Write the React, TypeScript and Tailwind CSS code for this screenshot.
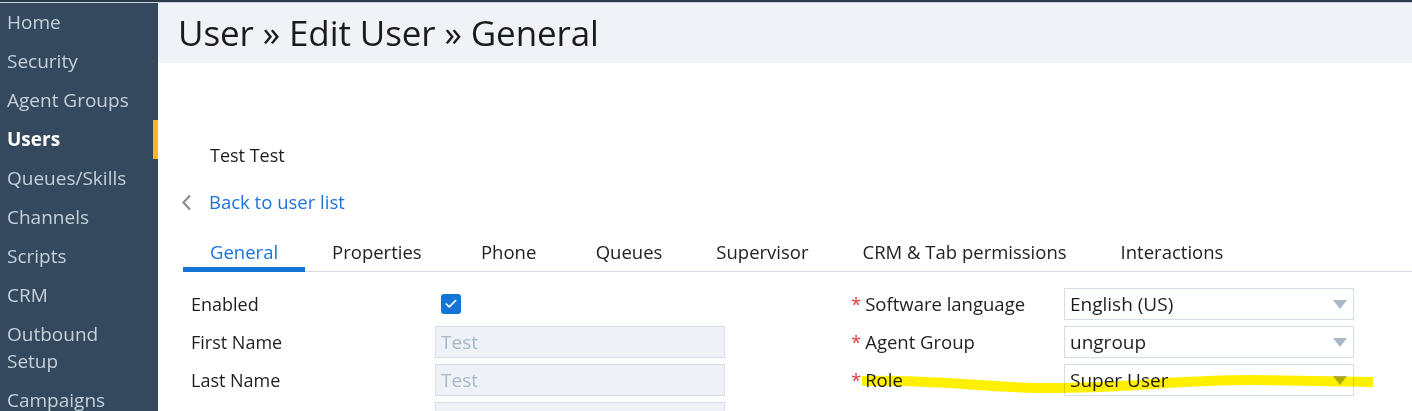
import { Check } from "lucide-react";

const navItems = [
  "Home",
  "Security",
  "Agent Groups",
  "Users",
  "Queues/Skills",
  "Channels",
  "Scripts",
  "CRM",
  "Outbound Setup",
  "Campaigns",
];

const tabs = [
  "General",
  "Properties",
  "Phone",
  "Queues",
  "Supervisor",
  "CRM & Tab permissions",
  "Interactions",
];

function SelectBox({ value }: { value: string }) {
  return (
    <div className="w-[290px] h-[32px] border border-[#d5dde8] bg-white flex items-center justify-between pl-[5px] pr-[6px]">
      <span className="text-[19px] text-[#1e1e1e]">{value}</span>
      <svg width="14" height="9" viewBox="0 0 14 9">
        <path d="M0 0 L14 0 L7 9 Z" fill="#a9b7c9" />
      </svg>
    </div>
  );
}

function TextBox({ value }: { value?: string }) {
  return (
    <div className="w-[290px] h-[32px] border border-[#d5dde8] bg-[#eef2f7] flex items-center pl-[5px]">
      <span className="text-[19px] text-[#a8b8cb]">{value}</span>
    </div>
  );
}

export default function App() {
  return (
    <div className="relative w-[1412px] h-[411px] overflow-hidden bg-white font-['Open_Sans',sans-serif]">
      <div className="h-[3px] bg-[#2a3949] border-b border-[#c9d1da]" />
      <div className="flex h-[408px]">
        {/* LEFT: Sidebar */}
        <div className="w-[158px] shrink-0 bg-[#34495e]">
          {navItems.map((item) => (
            <div
              key={item}
              className={`relative pl-[7px] pr-2 text-[19px] ${
                item === "Outbound Setup" ? "py-[6px] leading-[27px]" : "py-[8px] leading-[23px]"
              } ${item === "Users" ? "text-white font-bold" : "text-[#c5d0db]"}`}
            >
              {item === "Outbound Setup" ? (
                <>
                  Outbound
                  <br />
                  Setup
                </>
              ) : (
                item
              )}
              {item === "Users" && (
                <div className="absolute right-0 top-0 w-[5px] h-full bg-[#fbb526]" />
              )}
            </div>
          ))}
        </div>

        {/* RIGHT: Content */}
        <div className="flex-1 flex flex-col">
          <div className="h-[60px] shrink-0 bg-[#eff2f7] flex items-center pl-[20px]">
            <h1 className="text-[35px] text-[#1b1b1b] tracking-[-0.1px]">
              User » Edit User » General
            </h1>
          </div>

          <div className="shrink-0 mt-[80px] h-[24px] leading-[24px] pl-[52px] text-[18px] text-[#1d1d1d]">
            Test Test
          </div>

          <div className="shrink-0 mt-[23px] h-[24px] flex items-center pl-[23px] text-[#1b73d8]">
            <svg width="11" height="17" viewBox="0 0 11 17">
              <polyline points="9,1.5 2.5,8.5 9,15.5" fill="none" stroke="#8a8f96" strokeWidth="2.2" />
            </svg>
            <span className="ml-[17px] text-[18.5px] leading-[24px]">Back to user list</span>
          </div>

          <div className="shrink-0 mt-[26px] ml-[25px] flex border-b border-[#d3dae3]">
            {tabs.map((tab) => (
              <div
                key={tab}
                className={`min-w-[120px] text-center px-[27px] pb-[3px] text-[18.5px] leading-[24px] -mb-px border-b-[5px] ${
                  tab === "General"
                    ? "text-[#1b73d8] border-[#1475d6]"
                    : "text-[#222] border-transparent"
                }`}
              >
                {tab}
              </div>
            ))}
          </div>

          <div className="shrink-0 flex pt-[16px] text-[18px] text-[#1f1f1f]">
            {/* left column */}
            <div className="pl-[33px] flex flex-col gap-[6px]">
              <div className="flex items-center h-[32px]">
                <span className="w-[244px]">Enabled</span>
                <div className="ml-[6px] w-[20px] h-[20px] rounded-[3px] bg-[#1475d6] flex items-center justify-center">
                  <Check size={14} strokeWidth={3} className="text-white" />
                </div>
              </div>
              <div className="flex items-center h-[32px]">
                <span className="w-[244px]">First Name</span>
                <TextBox value="Test" />
              </div>
              <div className="flex items-center h-[32px]">
                <span className="w-[244px]">Last Name</span>
                <TextBox value="Test" />
              </div>
              <div className="flex items-center h-[32px]">
                <span className="w-[244px]">Display Name</span>
                <TextBox />
              </div>
            </div>

            {/* right column */}
            <div className="ml-[126px] flex flex-col gap-[6px]">
              {[
                ["Software language", "English (US)"],
                ["Agent Group", "ungroup"],
                ["Role", "Super User"],
              ].map(([label, value]) => (
                <div key={label} className="flex items-center h-[32px]">
                  <span className="w-[213px] text-[18.5px]">
                    <span className="text-[#e33b3b] mr-[4px]">*</span>
                    {label}
                  </span>
                  <SelectBox value={value} />
                </div>
              ))}
            </div>
          </div>
        </div>
      </div>

      {/* yellow highlighter annotation */}
      <svg className="absolute left-0 top-0 pointer-events-none mix-blend-multiply" width="1412" height="411">
        <path
          d="M862 381 C940 379 990 389 1060 388 C1140 387 1180 380 1250 380 L1373 382"
          stroke="#fff000"
          strokeWidth="10"
          fill="none"
        />
      </svg>
    </div>
  );
}
